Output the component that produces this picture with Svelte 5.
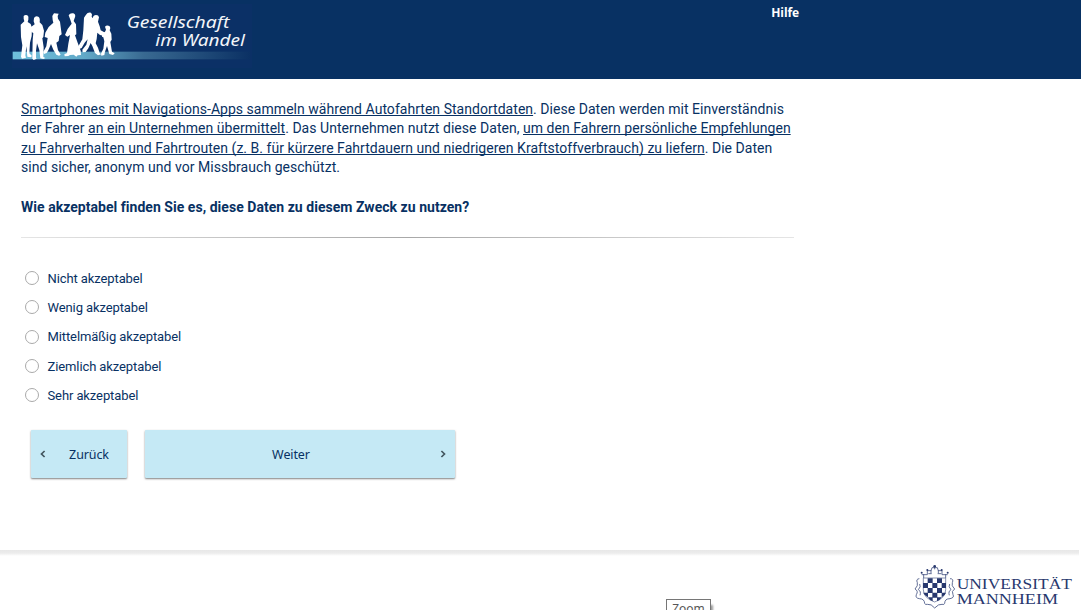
<script lang="ts">
  const options = ['Nicht akzeptabel', 'Wenig akzeptabel', 'Mittelmäßig akzeptabel', 'Ziemlich akzeptabel', 'Sehr akzeptabel'];
  let selected = $state('');
</script>

<div class="page">
  <header>
    <svg class="logo" viewBox="0 0 780 237" role="img" aria-label="Gesellschaft im Wandel">
      <defs>
        <linearGradient id="band" x1="0" x2="1">
          <stop offset="0" stop-color="#6fc0dc" />
          <stop offset=".3" stop-color="#62a9c8" />
          <stop offset=".55" stop-color="#396a92" />
          <stop offset="1" stop-color="#0b3164" />
        </linearGradient>
      </defs>
      <rect x="36" y="12" width="720" height="192" fill="#0b3066" />
      <rect x="38" y="155" width="712" height="23" fill="url(#band)" />
      <g fill="#fff" transform="translate(48 24)">
        <path d="M23 24q4-4 11-2 5 3 3 13l-2 7 9 6 4 12-1 24-5 20-2 32 8 8-4 4-10-2-3-31-3 27 2 7-12 3-3-6 4-34-4-25-1-37 11-10-2-8z" />
        <path d="M54 30q4-7 13-4 6 3 4 17l8 8 5 17-2 19-3 4 4 27-1 29 6 3-6 3-9-2-3-25-7-20-3 22 0 22 2 2-9 4-4-4 1-56 2-20-9-8 1-10 12-9-3-9z" />
        <path d="M109 24l5-8 14 1-3 7 1 8 6 9 5 38-7 5-2 15-7 5 5 22 8 14-5 3-8-3-9-15-7-17-8 19-5 8-8 3-2-7 9-16 4-25-9-3 2-13 10-17 14-13-2-8z" />
        <path d="M158 22q4-8 14-6 9 4 4 14l-3 9 7 10 1 30-4 3 8 22 9 24 1 13-10 1-4 4-8-6-11 1-5 3-11 1-1-6 8-4 4-28 5-26-8 5-7-5 8-18 12-16-4-12z" />
        <path d="M210 20q5-8 15-6 5 4 2 12l3 5q2-10 10-10 8 0 9 7l-3 13 5 14 3 12 15 8-2 10-15-4-8-7-2 19-3 13 7 13 5 16 5 4-10 3-9-7-8-21-5-9-7 16-8 11-9 1-1-8 12-15 4-16-9 10-9 16-7 3-3-8 12-21 3-27 2-38 8-12z" />
        <path d="M267 56q6-6 14-1 4 4 0 12l5 10 1 18-4 7 5 29 8 5-5 5-11-3-7-24-6 17-2 10-9 2-1-6 7-15 3-22-3-12-4-2 0-8 9-7 3-6z" />
      </g>
      <g class="logo-text">
        <text x="380" y="84" textLength="308" lengthAdjust="spacingAndGlyphs">Gesellschaft</text>
        <text x="466" y="138" textLength="269" lengthAdjust="spacingAndGlyphs">im Wandel</text>
      </g>
    </svg>
    <a class="help" href="#hilfe">Hilfe</a>
  </header>

  <main>
    <section class="question">
      <p>
        <u>Smartphones mit Navigations-Apps sammeln während Autofahrten Standortdaten</u>. Diese Daten werden mit Einverständnis<br />
        der Fahrer <u>an ein Unternehmen übermittelt</u>. Das Unternehmen nutzt diese Daten, <u>um den Fahrern persönliche Empfehlungen<br />
        zu Fahrverhalten und Fahrtrouten (z. B. für kürzere Fahrtdauern und niedrigeren Kraftstoffverbrauch) zu liefern</u>. Die Daten<br />
        sind sicher, anonym und vor Missbrauch geschützt.
      </p>
      <p class="strong">Wie akzeptabel finden Sie es, diese Daten zu diesem Zweck zu nutzen?</p>
    </section>
    <div class="rule"></div>
    <div class="options">
      {#each options as option}
        <label><input type="radio" name="answer" value={option} bind:group={selected} /><span>{option}</span></label>
      {/each}
    </div>
    <nav>
      <button class="back">
        <svg viewBox="0 0 6 8"><path d="M4.6 1 1.5 4l3.1 3" /></svg><span>Zurück</span>
      </button>
      <button class="next">
        <span>Weiter</span><svg viewBox="0 0 6 8"><path d="M1.4 1l3.1 3-3.1 3" /></svg>
      </button>
    </nav>
  </main>

  <footer>
    <div class="shade"></div>
    <svg class="uni" viewBox="0 0 528 156" role="img" aria-label="Universität Mannheim">
      <g fill="none" stroke="#4a5887" stroke-width="2.6">
        <path d="M50 50h17v-12h11l3-9h16l3 9h11v12h17M56 48v12M122 48v12M78 36v10M100 36v10M70 47h10M98 47h11M89 26v8" />
        <path d="M55 60h67v35q0 25-33 37-34-12-34-37z" stroke-width="2" />
        <path d="M43 62q-11 1-6 12 3 9-7 19 11 6 4 17-4 10 9 12 15 0 16 14 1 5 8 3 12-2 22 11 12-13 22-11 7 2 8-3 0-14 16-14 14-3 9-12-6-11 5-17-11-10-7-19 5-12-7-12M44 78q5 8-4 17 9 5 5 17M134 78q-5 8 4 17-9 5-5 17" />
      </g>
      <g fill="#28386e">
        <circle cx="50" cy="44" r="3" /><circle cx="67" cy="36" r="3" /><circle cx="89" cy="25" r="4" /><circle cx="110" cy="36" r="3" /><circle cx="128" cy="44" r="3" />
        <path d="M68 61h15v14H68zM96 61h15v14H96zM54 75h15v15H54zM82 75h15v15H82zM110 75h13v15h-13zM68 90h15v15H68zM96 90h15v15H96zM55 104h14v14q-12-7-14-14zM82 104h15v15H82zM110 104h13q-3 9-13 14zM69 118h14v12q-10-4-14-12zM96 118h14q-4 8-14 12z" />
      </g>
      <g class="uni-text">
        <text x="155" y="93" textLength="346" lengthAdjust="spacingAndGlyphs">UNIVERSITÄT</text>
        <text x="155" y="137" textLength="304" lengthAdjust="spacingAndGlyphs">MANNHEIM</text>
      </g>
    </svg>
  </footer>
  <div class="tooltip">Zoom</div>
</div>

<style>
  :global(body) { margin: 0; overflow: hidden; background: #fff; }
  .page { position: relative; display: flex; flex-direction: column; width: 1081px; height: 610px; overflow: hidden; color: #083163; font-family: Roboto, sans-serif; }
  header { flex: none; display: flex; width: 799px; height: 79px; padding-right: 282px; justify-content: space-between; align-items: flex-start; background: #083163; }
  .logo { width: 260px; height: 79px; }
  .logo-text { font: italic 49px "Noto Sans", sans-serif; fill: #f2f5f9; }
  .help { margin-top: 4px; color: #fff; font: bold 12px/17px "Open Sans", sans-serif; letter-spacing: -.1px; text-decoration: none; }
  main { flex: none; height: 471px; padding: 0 21px; box-sizing: border-box; }
  .question { padding-top: 20.7px; height: 137.3px; font-size: 14px; line-height: 19.6px; white-space: nowrap; letter-spacing: .033px; }
  p { margin: 0 0 19.6px; }
  u { text-underline-offset: 1px; text-decoration-thickness: 1px; text-decoration-skip-ink: none; }
  .strong { font-weight: 700; letter-spacing: .035px; }
  .rule { width: 773px; height: 1px; background: linear-gradient(90deg, #e5e5e5, #a8a8a8 50%, #e5e5e5); }
  .options { display: flex; flex-direction: column; padding: 25.7px 0 0 4px; }
  label { display: flex; align-items: center; height: 29.3px; font-size: 13px; letter-spacing: -.1px; }
  input { appearance: none; width: 14px; height: 14px; box-sizing: border-box; margin: 0 8.5px .6px 0; border: 1px solid #aaa; border-radius: 50%; background: #fff; }
  input:checked { border: 4px solid #083163; }
  nav { display: flex; gap: 18px; padding: 20px 0 0 10px; }
  button { display: flex; align-items: center; height: 48px; padding: 0 9px; border: 0; border-radius: 1px; background: #c5e9f5; color: #083163; font: 12.5px "Noto Sans", sans-serif; letter-spacing: -.1px; box-shadow: 0 1px 2px rgba(0, 0, 0, .5); }
  .back { width: 96px; }
  .next { width: 310px; }
  button svg { width: 6px; height: 8px; fill: none; stroke: #43565f; stroke-width: 1.7; }
  button span { flex: 1; text-align: center; }
  .back span { padding-left: 14px; }
  .next span { padding-right: 12px; }
  footer { display: flex; flex-direction: column; align-items: flex-end; height: 60px; }
  .shade { align-self: flex-start; width: 1079px; height: 6px; background: linear-gradient(#e8e8e8, #ececec 50%, #fff); }
  .uni { width: 176px; height: 52px; margin-top: 2px; flex: none; }
  .uni-text { fill: #28386e; font: 43px "Liberation Serif", serif; }
  .tooltip { position: absolute; left: 666px; top: 599px; width: 45px; height: 20px; box-sizing: border-box; border: 1px solid #767676; background: #fff; color: #575757; font: 12px/18px "Noto Sans", sans-serif; text-align: center; box-shadow: 3px 5px 2px -1px rgba(0, 0, 0, .4); }
</style>
